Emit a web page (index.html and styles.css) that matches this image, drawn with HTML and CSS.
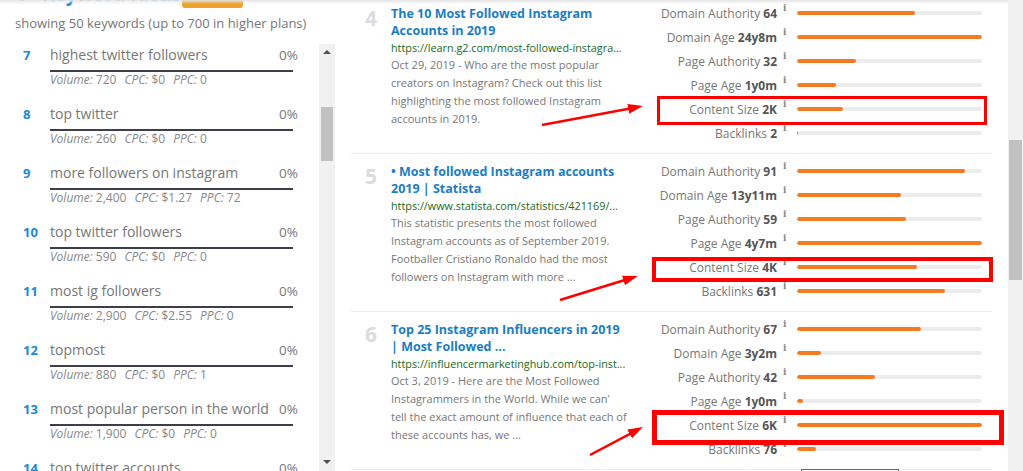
FILE: index.html
```html
<!DOCTYPE html>
<html lang="en">
<head>
  <meta charset="UTF-8" />
  <title>Keyword Ideas</title>
  <link rel="stylesheet" href="styles.css">
</head>
<body>
  <div class="top-shade"></div>
  <div class="page">
    <aside class="ideas">
      <div class="ideas-head">
        <h2><span class="head-num">7</span>Keyword Ideas</h2>
        <span class="badge">10</span>
      </div>
      <p class="showing">showing 50 keywords (up to 700 in higher plans)</p>
      <div class="kw-box">
        <ol class="kw-list">
          <li class="kw">
            <span class="kw-num">7</span>
            <div class="kw-body">
              <div class="kw-line"><span>highest twitter followers</span><span class="kw-pct">0%</span></div>
              <div class="kw-rule"></div>
              <div class="kw-stats"><span><i>Volume:</i> 720</span><span><i>CPC:</i> $0</span><span><i>PPC:</i> 0</span></div>
            </div>
          </li>
          <li class="kw">
            <span class="kw-num">8</span>
            <div class="kw-body">
              <div class="kw-line"><span>top twitter</span><span class="kw-pct">0%</span></div>
              <div class="kw-rule"></div>
              <div class="kw-stats"><span><i>Volume:</i> 260</span><span><i>CPC:</i> $0</span><span><i>PPC:</i> 0</span></div>
            </div>
          </li>
          <li class="kw">
            <span class="kw-num">9</span>
            <div class="kw-body">
              <div class="kw-line"><span>more followers on instagram</span><span class="kw-pct">0%</span></div>
              <div class="kw-rule"></div>
              <div class="kw-stats"><span><i>Volume:</i> 2,400</span><span><i>CPC:</i> $1.27</span><span><i>PPC:</i> 72</span></div>
            </div>
          </li>
          <li class="kw">
            <span class="kw-num">10</span>
            <div class="kw-body">
              <div class="kw-line"><span>top twitter followers</span><span class="kw-pct">0%</span></div>
              <div class="kw-rule"></div>
              <div class="kw-stats"><span><i>Volume:</i> 590</span><span><i>CPC:</i> $0</span><span><i>PPC:</i> 0</span></div>
            </div>
          </li>
          <li class="kw">
            <span class="kw-num">11</span>
            <div class="kw-body">
              <div class="kw-line"><span>most ig followers</span><span class="kw-pct">0%</span></div>
              <div class="kw-rule"></div>
              <div class="kw-stats"><span><i>Volume:</i> 2,900</span><span><i>CPC:</i> $2.55</span><span><i>PPC:</i> 0</span></div>
            </div>
          </li>
          <li class="kw">
            <span class="kw-num">12</span>
            <div class="kw-body">
              <div class="kw-line"><span>topmost</span><span class="kw-pct">0%</span></div>
              <div class="kw-rule"></div>
              <div class="kw-stats"><span><i>Volume:</i> 880</span><span><i>CPC:</i> $0</span><span><i>PPC:</i> 1</span></div>
            </div>
          </li>
          <li class="kw">
            <span class="kw-num">13</span>
            <div class="kw-body">
              <div class="kw-line"><span>most popular person in the world</span><span class="kw-pct">0%</span></div>
              <div class="kw-rule"></div>
              <div class="kw-stats"><span><i>Volume:</i> 1,900</span><span><i>CPC:</i> $0</span><span><i>PPC:</i> 0</span></div>
            </div>
          </li>
          <li class="kw">
            <span class="kw-num">14</span>
            <div class="kw-body">
              <div class="kw-line"><span>top twitter accounts</span><span class="kw-pct">0%</span></div>
              <div class="kw-rule"></div>
              <div class="kw-stats"><span><i>Volume:</i> 1,300</span><span><i>CPC:</i> $0</span><span><i>PPC:</i> 0</span></div>
            </div>
          </li>
        </ol>
        <div class="scroll scroll-small">
          <span class="arrow up"></span>
          <span class="thumb"></span>
          <span class="arrow down"></span>
        </div>
      </div>
    </aside>

    <main class="results">
      <div class="result">
        <div class="pos">4</div>
        <div class="snippet">
          <a class="title" href="#">The 10 Most Followed Instagram Accounts in 2019</a>
          <div class="url">https://learn.g2.com/most-followed-instagra...</div>
          <p class="desc">Oct 29, 2019 - Who are the most popular creators on Instagram? Check out this list highlighting the most followed Instagram accounts in 2019.</p>
        </div>
        <ul class="metrics">
          <li><span class="m-label">Domain Authority <b>64</b></span><span class="info">i</span><span class="bar"><span class="fill" style="width:64%"></span></span></li>
          <li><span class="m-label">Domain Age <b>24y8m</b></span><span class="info">i</span><span class="bar"><span class="fill" style="width:100%"></span></span></li>
          <li><span class="m-label">Page Authority <b>32</b></span><span class="info">i</span><span class="bar"><span class="fill" style="width:32%"></span></span></li>
          <li><span class="m-label">Page Age <b>1y0m</b></span><span class="info">i</span><span class="bar"><span class="fill" style="width:21%"></span></span></li>
          <li><span class="m-label">Content Size <b>2K</b></span><span class="info">i</span><span class="bar"><span class="fill" style="width:25%"></span></span></li>
          <li><span class="m-label">Backlinks <b>2</b></span><span class="info">i</span><span class="bar"><span class="fill" style="width:1px"></span></span></li>
        </ul>
      </div>

      <div class="result">
        <div class="pos">5</div>
        <div class="snippet">
          <a class="title" href="#">• Most followed Instagram accounts 2019 | Statista</a>
          <div class="url">https://www.statista.com/statistics/421169/...</div>
          <p class="desc">This statistic presents the most followed Instagram accounts as of September 2019. Footballer Cristiano Ronaldo had the most followers on Instagram with more ...</p>
        </div>
        <ul class="metrics">
          <li><span class="m-label">Domain Authority <b>91</b></span><span class="info">i</span><span class="bar"><span class="fill" style="width:91%"></span></span></li>
          <li><span class="m-label">Domain Age <b>13y11m</b></span><span class="info">i</span><span class="bar"><span class="fill" style="width:56%"></span></span></li>
          <li><span class="m-label">Page Authority <b>59</b></span><span class="info">i</span><span class="bar"><span class="fill" style="width:59%"></span></span></li>
          <li><span class="m-label">Page Age <b>4y7m</b></span><span class="info">i</span><span class="bar"><span class="fill" style="width:100%"></span></span></li>
          <li><span class="m-label">Content Size <b>4K</b></span><span class="info">i</span><span class="bar"><span class="fill" style="width:65%"></span></span></li>
          <li><span class="m-label">Backlinks <b>631</b></span><span class="info">i</span><span class="bar"><span class="fill" style="width:80%"></span></span></li>
        </ul>
      </div>

      <div class="result">
        <div class="pos">6</div>
        <div class="snippet">
          <a class="title" href="#">Top 25 Instagram Influencers in 2019 | Most Followed ...</a>
          <div class="url">https://influencermarketinghub.com/top-inst...</div>
          <p class="desc">Oct 3, 2019 - Here are the Most Followed Instagrammers in the World. While we can' tell the exact amount of influence that each of these accounts has, we ...</p>
        </div>
        <ul class="metrics">
          <li><span class="m-label">Domain Authority <b>67</b></span><span class="info">i</span><span class="bar"><span class="fill" style="width:67%"></span></span></li>
          <li><span class="m-label">Domain Age <b>3y2m</b></span><span class="info">i</span><span class="bar"><span class="fill" style="width:13%"></span></span></li>
          <li><span class="m-label">Page Authority <b>42</b></span><span class="info">i</span><span class="bar"><span class="fill" style="width:42%"></span></span></li>
          <li><span class="m-label">Page Age <b>1y0m</b></span><span class="info">i</span><span class="bar"><span class="fill" style="width:3%"></span></span></li>
          <li><span class="m-label">Content Size <b>6K</b></span><span class="info">i</span><span class="bar"><span class="fill" style="width:100%"></span></span></li>
          <li><span class="m-label">Backlinks <b>76</b></span><span class="info">i</span><span class="bar"><span class="fill" style="width:10%"></span></span></li>
        </ul>
      </div>

      <div class="more"></div>
    </main>

    <div class="scroll scroll-page"><span class="thumb"></span></div>
  </div>

  <!-- red annotations drawn on top of the screenshot -->
  <svg class="marks" width="1023" height="471" viewBox="0 0 1023 471">
    <defs>
      <marker id="head" markerWidth="6" markerHeight="4" refX="4" refY="2" orient="auto" markerUnits="strokeWidth">
        <path d="M0,0 L6,2 L0,4 z" fill="#f00" />
      </marker>
    </defs>
    <rect x="658.5" y="97.5" width="327" height="26" fill="none" stroke="#f00" stroke-width="3" />
    <rect x="654" y="259" width="337" height="21" fill="none" stroke="#f00" stroke-width="4" />
    <rect x="654.5" y="412.5" width="347" height="30" fill="none" stroke="#f00" stroke-width="5" />
    <line x1="542" y1="125" x2="638" y2="107" stroke="#f00" stroke-width="2.5" marker-end="url(#head)" />
    <line x1="560" y1="300" x2="633" y2="277.5" stroke="#f00" stroke-width="2.5" marker-end="url(#head)" />
    <line x1="590" y1="455" x2="638.5" y2="429.3" stroke="#f00" stroke-width="2.5" marker-end="url(#head)" />
  </svg>
</body>
</html>
```

FILE: styles.css
```css
* {
  box-sizing: border-box;
}

body {
  margin: 0;
  height: 471px;
  overflow: hidden;
  font-family: "Open Sans", "Liberation Sans", sans-serif;
  background: #fff;
  color: #777;
}

/* shadow of the fixed header above */
.top-shade {
  position: fixed;
  top: 0;
  left: 0;
  right: 15px;
  height: 4px;
  background: linear-gradient(#e4e4e4, rgba(255,255,255,0));
  z-index: 2;
}

.page {
  display: flex;
  height: 471px;
}

/* Left column: keyword ideas */
.ideas {
  width: 337px;
  display: flex;
  flex-direction: column;
}

.ideas-head {
  display: flex;
  align-items: flex-start;
  height: 26px;
  margin-top: -18px;
  padding-left: 18px;
}

.ideas-head h2 {
  margin: 0;
  width: 164px;
  font-size: 19px;
  line-height: 24px;
  font-weight: 700;
  color: #1a8ad4;
  white-space: nowrap;
}

.head-num {
  margin-right: 13px;
}

.badge {
  width: 61px;
  height: 26px;
  border-radius: 3px;
  background: #f0a22e;
  color: #fff;
  font-weight: 700;
  font-size: 14px;
  line-height: 26px;
  text-align: center;
}

.showing {
  margin: 6px 0 0 15px;
  font-size: 13px;
  line-height: 18px;
  color: #777;
}

.kw-box {
  display: flex;
  flex: 1;
  min-height: 0;
  margin-top: 12px;
}

.kw-list {
  flex: 1;
  list-style: none;
  margin: 0;
  padding: 1px 21px 0 23px;
  overflow: hidden;
}

.kw {
  display: flex;
  align-items: baseline;
  height: 59px;
}

.kw-num {
  width: 27px;
  flex: none;
  font-size: 13px;
  font-weight: 700;
  color: #1a8ad4;
}

.kw-body {
  flex: 1;
}

.kw-line {
  display: flex;
  justify-content: space-between;
  align-items: baseline;
  font-size: 14px;
  line-height: 20px;
  color: #777;
  white-space: nowrap;
  padding-bottom: 5px;
}

.kw-pct {
  font-size: 13.5px;
}

.kw-rule {
  height: 2px;
  margin-right: 5px;
  background: #3d3d4b;
}

.kw-stats {
  display: flex;
  gap: 8px;
  font-size: 12px;
  line-height: 16px;
  color: #888;
}

/* fake scrollbars */
.scroll {
  display: flex;
  flex-direction: column;
  align-items: center;
  background: #f1f1f1;
}

.scroll-small {
  width: 16px;
  margin-right: 2px;
}

.scroll-small .arrow {
  width: 0;
  height: 0;
  border-left: 4px solid transparent;
  border-right: 4px solid transparent;
}

.scroll-small .up {
  margin-top: 6px;
  border-bottom: 4px solid #505050;
}

.scroll-small .down {
  margin-top: auto;
  margin-bottom: 7px;
  border-top: 4px solid #505050;
}

.scroll-small .thumb {
  width: 12px;
  height: 54px;
  margin-top: 53px;
  background: #c1c1c1;
}

.scroll-page {
  width: 15px;
}

.scroll-page .thumb {
  width: 13px;
  height: 140px;
  margin-top: 140px;
  background: #c1c1c1;
}

/* Middle: search results */
.results {
  flex: 1;
  margin-top: -4px;
  padding: 0 16px 0 14px;
}

.result {
  display: grid;
  grid-template-columns: 40px 237px 1fr;
  height: 158px;
  padding: 5px 0 8px;
  border-bottom: 1px solid #ececec;
}

.pos {
  padding-top: 4px;
  text-align: center;
  font-size: 21px;
  line-height: 26px;
  font-weight: 700;
  color: #dcdcdc;
}

.snippet {
  padding-top: 4px;
}

.title {
  display: block;
  padding-right: 6px;
  font-size: 12.5px;
  line-height: 17px;
  font-weight: 700;
  color: #1a7dc4;
  text-decoration: none;
}

.url {
  font-size: 10.8px;
  line-height: 17px;
  color: #17691b;
  white-space: nowrap;
}

.desc {
  margin: 0;
  font-size: 11px;
  line-height: 18px;
  color: #777;
}

.metrics {
  list-style: none;
  margin: 0;
  padding: 0;
}

.metrics li {
  display: grid;
  grid-template-columns: 149px 20px 185px;
  align-items: center;
  height: 24px;
}

.m-label {
  text-align: right;
  font-size: 12px;
  white-space: nowrap;
  color: #777;
}

.m-label b {
  color: #555;
}

.info {
  align-self: start;
  padding: 3px 0 0 6px;
  font-family: "DejaVu Serif", serif;
  font-size: 9px;
  font-weight: 700;
  line-height: 1;
  color: #888;
}

.bar {
  display: block;
  height: 4px;
  border-radius: 2px;
  background: #ececec;
  overflow: hidden;
}

.fill {
  display: block;
  height: 100%;
  border-radius: 2px;
  background: #f57a20;
}

.more {
  width: 98px;
  height: 20px;
  margin: -1px 0 0 450px;
  border: 1px solid #666;
}

.marks {
  position: absolute;
  top: 0;
  left: 0;
  pointer-events: none;
  z-index: 3;
}
```
